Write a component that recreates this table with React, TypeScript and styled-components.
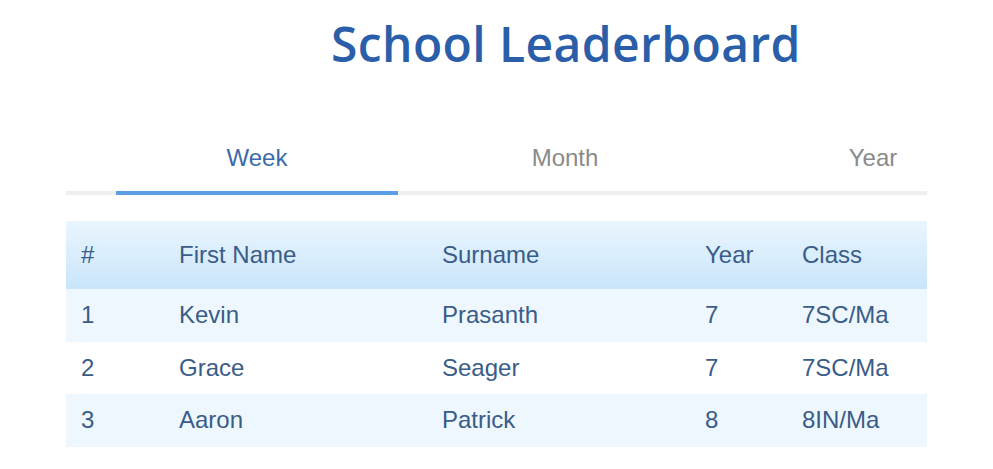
import { useState } from "react";
import styled, { createGlobalStyle } from "styled-components";

const GlobalStyle = createGlobalStyle`
  body {
    margin: 0;
    background: #ffffff;
    font-family: "Liberation Sans", Arial, sans-serif;
  }
`;

const Page = styled.div`
  width: 993px;
  height: 469px;
  padding: 0 66px;
  box-sizing: border-box;
  overflow: hidden;
`;

const Title = styled.h1`
  margin: 0;
  padding: 14px 0 0 265px;
  height: 118px;
  box-sizing: border-box;
  font-family: "Open Sans", sans-serif;
  font-weight: 600;
  font-size: 48px;
  line-height: 60px;
  color: #2a5ea8;
  letter-spacing: 0.4px;
`;

const TabBar = styled.div`
  display: flex;
  padding-left: 37px;
  height: 77px;
  overflow: hidden;
  background: linear-gradient(#efefef, #efefef) left bottom / 100% 4px no-repeat;
`;

const Tab = styled.button<{ $active?: boolean }>`
  position: relative;
  flex: 0 0 308px;
  background: none;
  border: none;
  padding: 2px 0 0;
  font-family: "Liberation Sans", Arial, sans-serif;
  font-size: 24px;
  color: ${({ $active }) => ($active ? "#3b6aa9" : "#8a8a8a")};
  cursor: pointer;

  &::after {
    content: "";
    display: ${({ $active }) => ($active ? "block" : "none")};
    position: absolute;
    left: 13px;
    right: 13px;
    bottom: 0;
    height: 4px;
    background: #5a9fe4;
  }
`;

const Table = styled.table`
  width: 100%;
  margin-top: 26px;
  border-collapse: collapse;
  table-layout: fixed;
  font-size: 24px;
  color: #3a5c88;
`;

const HeadRow = styled.tr`
  height: 68px;
  background: linear-gradient(to bottom, #eaf5fe 0%, #c9e5fa 100%);
`;

const Row = styled.tr<{ $shade: boolean }>`
  height: 52.5px;
  background: ${({ $shade }) => ($shade ? "#eef7fe" : "#ffffff")};
`;

const Th = styled.th`
  padding: 0 0 0 15px;
  text-align: left;
  font-weight: normal;
`;

const Td = styled.td`
  padding: 0 0 0 15px;
  white-space: nowrap;
`;

const columns = [
  { label: "#", width: 98 },
  { label: "First Name", width: 263 },
  { label: "Surname", width: 263 },
  { label: "Year", width: 97 },
  { label: "Class", width: 140 },
];

const students = [
  { rank: 1, first: "Kevin", last: "Prasanth", year: 7, cls: "7SC/Ma" },
  { rank: 2, first: "Grace", last: "Seager", year: 7, cls: "7SC/Ma" },
  { rank: 3, first: "Aaron", last: "Patrick", year: 8, cls: "8IN/Ma" },
];

const periods = ["Week", "Month", "Year"];

export default function App() {
  const [period, setPeriod] = useState("Week");

  return (
    <>
      <GlobalStyle />
      <Page>
        <Title>School Leaderboard</Title>
        <TabBar>
          {periods.map((p) => (
            <Tab key={p} $active={p === period} onClick={() => setPeriod(p)}>
              {p}
            </Tab>
          ))}
        </TabBar>
        <Table>
          <colgroup>
            {columns.map((c) => (
              <col key={c.label} style={{ width: c.width }} />
            ))}
          </colgroup>
          <thead>
            <HeadRow>
              {columns.map((c) => (
                <Th key={c.label}>{c.label}</Th>
              ))}
            </HeadRow>
          </thead>
          <tbody>
            {students.map((s, i) => (
              <Row key={s.rank} $shade={i % 2 === 0}>
                <Td>{s.rank}</Td>
                <Td>{s.first}</Td>
                <Td>{s.last}</Td>
                <Td>{s.year}</Td>
                <Td>{s.cls}</Td>
              </Row>
            ))}
          </tbody>
        </Table>
      </Page>
    </>
  );
}
